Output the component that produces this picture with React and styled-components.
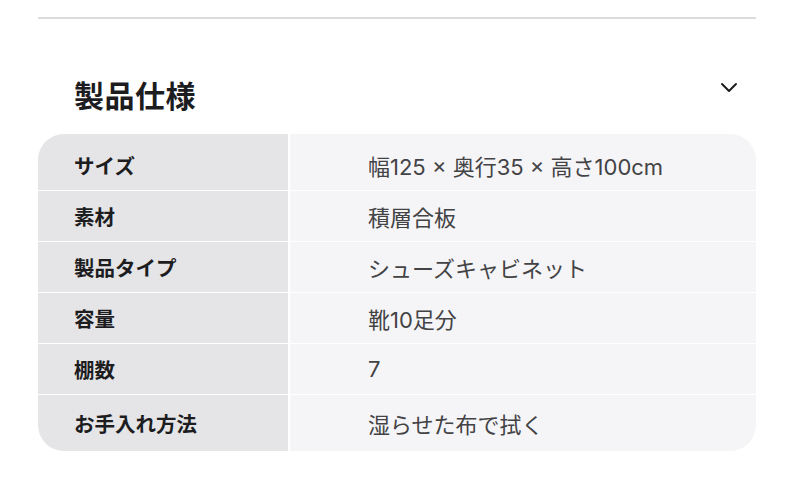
import styled, { createGlobalStyle } from 'styled-components'

const GlobalStyle = createGlobalStyle`
    body {
        margin: 0;
        background: #ffffff;
        font-family: "Noto Sans CJK JP", "Noto Sans", sans-serif;
    }
`
const Page = styled.div`
    width: 790px;
    padding: 17px 34px 0 38px;
    box-sizing: border-box;
`
const Divider = styled.hr`
    margin: 0;
    border: none;
    border-top: 2px solid #dcdcdc;
`
const Header = styled.div`
    display: flex;
    align-items: center;
    justify-content: space-between;
    padding: 44px 18px 0 36px;
    height: 62px;
`
const Title = styled.h2`
    margin: 0;
    font-size: 30px;
    font-weight: 700;
    color: #1d1d1f;
    letter-spacing: 0.5px;
    line-height: 1;
`
const Chevron = styled.button`
    border: none;
    background: none;
    padding: 0;
    display: flex;
    margin-top: -14px;
`
const Table = styled.div`
    margin-top: 9px;
    border-radius: 26px;
    overflow: hidden;
    display: flex;
    flex-direction: column;
    gap: 1px;
    background: #ffffff;
`
const Row = styled.div`
    display: grid;
    grid-template-columns: 250px 1fr;
    column-gap: 2px;
    height: ${p => (p.$edge ? '56px' : '50px')};

    & > div {
        padding-top: ${p => (p.$first ? '6px' : '0')};
    }
`
const Label = styled.div`
    background: #e5e5e7;
    display: flex;
    align-items: center;
    padding-left: 36px;
    font-size: 20.5px;
    font-weight: 700;
    color: #1d1d1f;
`
const Value = styled.div`
    background: #f5f5f7;
    display: flex;
    align-items: center;
    padding-left: 78px;
    font-family: "Inter", "Noto Sans CJK JP", sans-serif;
    font-size: 22px;
    color: #434345;
`

const specs = [
    ['サイズ', '幅125 × 奥行35 × 高さ100cm'],
    ['素材', '積層合板'],
    ['製品タイプ', 'シューズキャビネット'],
    ['容量', '靴10足分'],
    ['棚数', '7'],
    ['お手入れ方法', '湿らせた布で拭く'],
]

const App = () => {
    return (
        <Page>
            <GlobalStyle />
            <Divider />
            <Header>
                <Title>製品仕様</Title>
                <Chevron type="button" aria-label="toggle">
                    <svg width="18" height="12" viewBox="0 0 18 12" fill="none">
                        <path d="M2 3 L9 10 L16 3" stroke="#1d1d1f" strokeWidth="2" strokeLinecap="round" strokeLinejoin="round" />
                    </svg>
                </Chevron>
            </Header>
            <Table>
                {specs.map(([k, v], i) => (
                    <Row key={k} $edge={i === 0 || i === specs.length - 1} $first={i === 0}>
                        <Label>{k}</Label>
                        <Value>{v}</Value>
                    </Row>
                ))}
            </Table>
        </Page>
    )
}

export default App
